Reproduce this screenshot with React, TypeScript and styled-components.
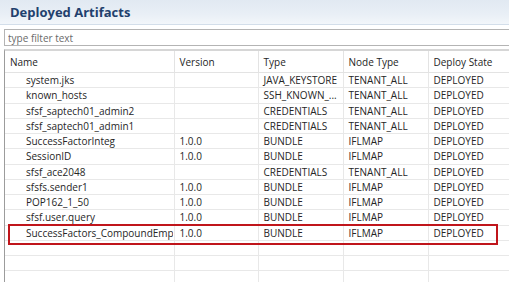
import React from "react";
import styled, { createGlobalStyle } from "styled-components";

interface IArtifact {
  name: string;
  version: string;
  type: string;
  nodeType: string;
  state: string;
}

const artifacts: IArtifact[] = [
  { name: "system.jks", version: "", type: "JAVA_KEYSTORE", nodeType: "TENANT_ALL", state: "DEPLOYED" },
  { name: "known_hosts", version: "", type: "SSH_KNOWN_...", nodeType: "TENANT_ALL", state: "DEPLOYED" },
  { name: "sfsf_saptech01_admin2", version: "", type: "CREDENTIALS", nodeType: "TENANT_ALL", state: "DEPLOYED" },
  { name: "sfsf_saptech01_admin1", version: "", type: "CREDENTIALS", nodeType: "TENANT_ALL", state: "DEPLOYED" },
  { name: "SuccessFactorInteg", version: "1.0.0", type: "BUNDLE", nodeType: "IFLMAP", state: "DEPLOYED" },
  { name: "SessionID", version: "1.0.0", type: "BUNDLE", nodeType: "IFLMAP", state: "DEPLOYED" },
  { name: "sfsf_ace2048", version: "", type: "CREDENTIALS", nodeType: "TENANT_ALL", state: "DEPLOYED" },
  { name: "sfsfs.sender1", version: "1.0.0", type: "BUNDLE", nodeType: "IFLMAP", state: "DEPLOYED" },
  { name: "POP162_1_50", version: "1.0.0", type: "BUNDLE", nodeType: "IFLMAP", state: "DEPLOYED" },
  { name: "sfsf.user.query", version: "1.0.0", type: "BUNDLE", nodeType: "IFLMAP", state: "DEPLOYED" },
  { name: "SuccessFactors_CompoundEmployee", version: "1.0.0", type: "BUNDLE", nodeType: "IFLMAP", state: "DEPLOYED" },
];

const highlightedName = "SuccessFactors_CompoundEmployee";
const emptyRows = 3;

const columns = [
  { label: "Name", width: 169 },
  { label: "Version", width: 84 },
  { label: "Type", width: 85 },
  { label: "Node Type", width: 85 },
  { label: "Deploy State", width: 81 },
];

const App: React.FC = () => {
  return (
    <>
      <GlobalStyle />
      <View>
        <TitleBar>
          <Title>Deployed Artifacts</Title>
        </TitleBar>
        <FilterInput placeholder="type filter text" />
        <TableFrame>
          <Table>
            <colgroup>
              {columns.map((c) => (
                <Col key={c.label} $width={c.width} />
              ))}
            </colgroup>
            <thead>
              <tr>
                {columns.map((c) => (
                  <HeadCell key={c.label}>{c.label}</HeadCell>
                ))}
              </tr>
            </thead>
            <tbody>
              {artifacts.map((a) => (
                <Row key={a.name}>
                  <NameCell $highlighted={a.name === highlightedName}>
                    <NameText>{a.name}</NameText>
                  </NameCell>
                  <Cell>{a.version}</Cell>
                  <Cell>{a.type}</Cell>
                  <Cell>{a.nodeType}</Cell>
                  <Cell>{a.state}</Cell>
                </Row>
              ))}
              {Array.from({ length: emptyRows }).map((_, i) => (
                <Row key={`empty-${i}`}>
                  {columns.map((c) => (
                    <Cell key={c.label} />
                  ))}
                </Row>
              ))}
            </tbody>
          </Table>
        </TableFrame>
      </View>
    </>
  );
};
export default App;

const GlobalStyle = createGlobalStyle`
  html, body {
    margin: 0;
    padding: 0;
    background: #ffffff;
  }
  body {
    font-family: "Open Sans", "Noto Sans", sans-serif;
  }
`;

const View = styled.div`
  display: flex;
  flex-direction: column;
  width: 509px;
  height: 282px;
  overflow: hidden;
  background: #ffffff;
`;

const TitleBar = styled.div`
  display: flex;
  align-items: center;
  height: 24px;
  padding-left: 10px;
  background: linear-gradient(to bottom, #e1e9f2 0%, #e9eff6 60%, #f2f6fa 100%);
  border-bottom: 1px solid #d3deea;
`;

const Title = styled.span`
  font-size: 13px;
  font-weight: 700;
  color: #22406d;
`;

const FilterInput = styled.input`
  margin: 4px 0 0 4px;
  height: 17px;
  box-sizing: border-box;
  padding: 0 0 0 3px;
  border: 1px solid #b4b4b4;
  border-right: none;
  outline: none;
  font-family: "Open Sans", "Noto Sans", sans-serif;
  font-size: 10px;
  color: #222;
  &::placeholder {
    color: #6a6a6a;
  }
`;

const TableFrame = styled.div`
  flex: 1;
  margin: 3px 0 0 4px;
  border-top: 2px solid #d6d6d6;
  border-left: 1px solid #9c9c9c;
  overflow: hidden;
`;

const Table = styled.table`
  table-layout: fixed;
  border-collapse: collapse;
  width: 504px;
  font-size: 10px;
  color: #262626;
`;

const Col = styled.col<{ $width: number }>`
  width: ${({ $width }) => $width}px;
`;

const HeadCell = styled.th`
  height: 20px;
  padding: 1px 0 0 5px;
  text-align: left;
  font-weight: 400;
  color: #1e1e1e;
  white-space: nowrap;
  overflow: hidden;
  border-right: 1px solid #e3e3e3;
  border-bottom: 1px solid #e3e3e3;
  vertical-align: middle;
`;

const Row = styled.tr`
  height: 15.25px;
`;

const Cell = styled.td`
  padding: 0 0 0 5px;
  white-space: nowrap;
  overflow: hidden;
  line-height: 14px;
  border-right: 1px solid #e8e8e8;
  border-bottom: 1px solid #e8e8e8;
`;

const NameCell = styled(Cell)<{ $highlighted?: boolean }>`
  position: relative;
  overflow: visible;
  padding-left: 21px;
  ${({ $highlighted }) =>
    $highlighted &&
    `
    &::after {
      content: "";
      position: absolute;
      left: 3px;
      top: -2px;
      width: 486px;
      height: 17px;
      border: 2px solid #c0151b;
      pointer-events: none;
    }
  `}
`;

const NameText = styled.span`
  display: block;
  width: 147px;
  overflow: hidden;
  white-space: nowrap;
`;
